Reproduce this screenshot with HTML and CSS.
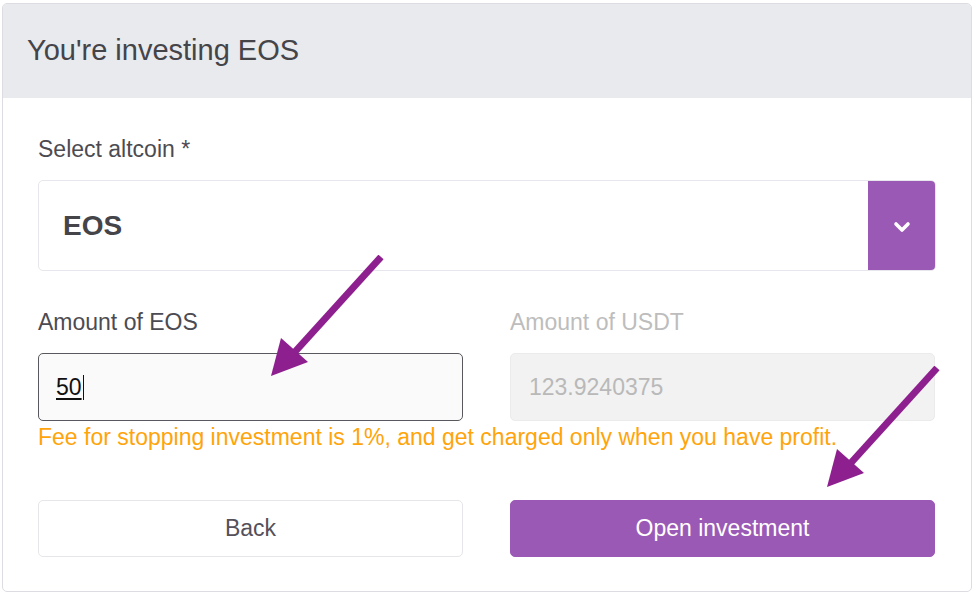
FILE: index.html
```html
<!DOCTYPE html>
<html>
<head>
<meta charset="utf-8">
<link rel="stylesheet" href="styles.css">
</head>
<body>
<div class="card">
  <div class="card-header">You're investing EOS</div>
  <div class="card-body">
    <div class="field">
      <label class="label">Select altcoin *</label>
      <div class="select">
        <span class="select-value">EOS</span>
        <span class="select-btn">
          <svg width="18" height="12" viewBox="0 0 18 12"><path d="M3 3 L9 9 L15 3" fill="none" stroke="#fff" stroke-width="3.6" stroke-linecap="round" stroke-linejoin="round"/></svg>
        </span>
      </div>
    </div>
    <div class="row">
      <div class="field">
        <label class="label">Amount of EOS</label>
        <div class="input focused"><span class="typed">50</span><span class="caret"></span></div>
      </div>
      <div class="field">
        <label class="label disabled">Amount of USDT</label>
        <div class="input readonly">123.9240375</div>
      </div>
    </div>
    <p class="fee">Fee for stopping investment is 1%, and get charged only when you have profit.</p>
    <div class="row buttons">
      <button class="btn btn-back">Back</button>
      <button class="btn btn-primary">Open investment</button>
    </div>
  </div>
  <svg class="arrow arrow-1" width="120" height="125" viewBox="0 0 120 125"><line x1="110" y1="2" x2="22" y2="99" stroke="#8e1f8e" stroke-width="7"/><polygon points="0,121 10,83 37,107" fill="#8e1f8e"/></svg>
  <svg class="arrow arrow-2" width="120" height="125" viewBox="0 0 120 125"><line x1="110" y1="2" x2="22" y2="99" stroke="#8e1f8e" stroke-width="7"/><polygon points="0,121 10,83 37,107" fill="#8e1f8e"/></svg>
</div>
</body>
</html>
```

FILE: styles.css
```css
* { box-sizing: border-box; }
html, body { margin: 0; padding: 0; background: #fff; }
body { font-family: "Liberation Sans", Arial, sans-serif; }

.card {
  position: relative;
  margin: 3px 2px 0 2px;
  width: 970px;
  height: 589px;
  border: 1px solid #dcdce2;
  border-radius: 5px;
  overflow: hidden;
}
.card-header {
  height: 94px;
  background: #e9eaee;
  padding-left: 24px;
  display: flex;
  align-items: center;
  font-size: 29px;
  color: #444449;
  padding-bottom: 2px;
}
.card-body {
  padding: 38px 35px 0 35px;
  display: flex;
  flex-direction: column;
}
.field { display: flex; flex-direction: column; }
.label {
  font-size: 23px;
  line-height: 27px;
  color: #4c4b52;
  margin-bottom: 17px;
}
.label.disabled { color: #bdbdbd; }
.select {
  height: 91px;
  border: 1px solid #e6e6ec;
  border-radius: 5px;
  display: flex;
  align-items: center;
  justify-content: space-between;
  overflow: hidden;
}
.select-value {
  padding-left: 24px;
  font-size: 28px;
  font-weight: bold;
  color: #444449;
}
.select-btn {
  width: 67px;
  height: 100%;
  background: #9b59b6;
  display: flex;
  align-items: center;
  justify-content: center;
  padding-top: 2px;
}
.row {
  display: grid;
  grid-template-columns: 425px 425px;
  gap: 47px;
}
.field + .row { margin-top: 38px; }
.input {
  height: 68px;
  border-radius: 5px;
  font-size: 23px;
  display: flex;
  align-items: center;
  padding-left: 17px;
}
.input.focused {
  border: 1.5px solid #58585e;
  background: #fafafa;
  color: #111;
}
.typed { text-decoration: underline; text-underline-offset: 3px; }
.caret { display: inline-block; width: 1px; height: 25px; background: #111; margin-left: 1px; }
.input.readonly {
  border: 1px solid #ebebeb;
  background: #f2f2f2;
  color: #b9b9b9;
  padding-left: 18px;
}
.fee {
  margin: 4px 0 0 0;
  font-size: 23px;
  line-height: 25px;
  color: #ffa40a;
  white-space: nowrap;
}
.buttons { margin-top: 50px; }
.btn {
  height: 57px;
  border-radius: 5px;
  font-family: "Liberation Sans", Arial, sans-serif;
  font-size: 23px;
  cursor: pointer;
}
.btn-back {
  background: #fff;
  border: 1px solid #e6e6ea;
  color: #555059;
}
.btn-primary {
  background: #9b59b6;
  border: 1px solid #9b59b6;
  color: #fff;
}
.arrow { position: absolute; }
.arrow-1 { left: 268px; top: 251px; }
.arrow-2 { left: 824px; top: 362px; }
```
